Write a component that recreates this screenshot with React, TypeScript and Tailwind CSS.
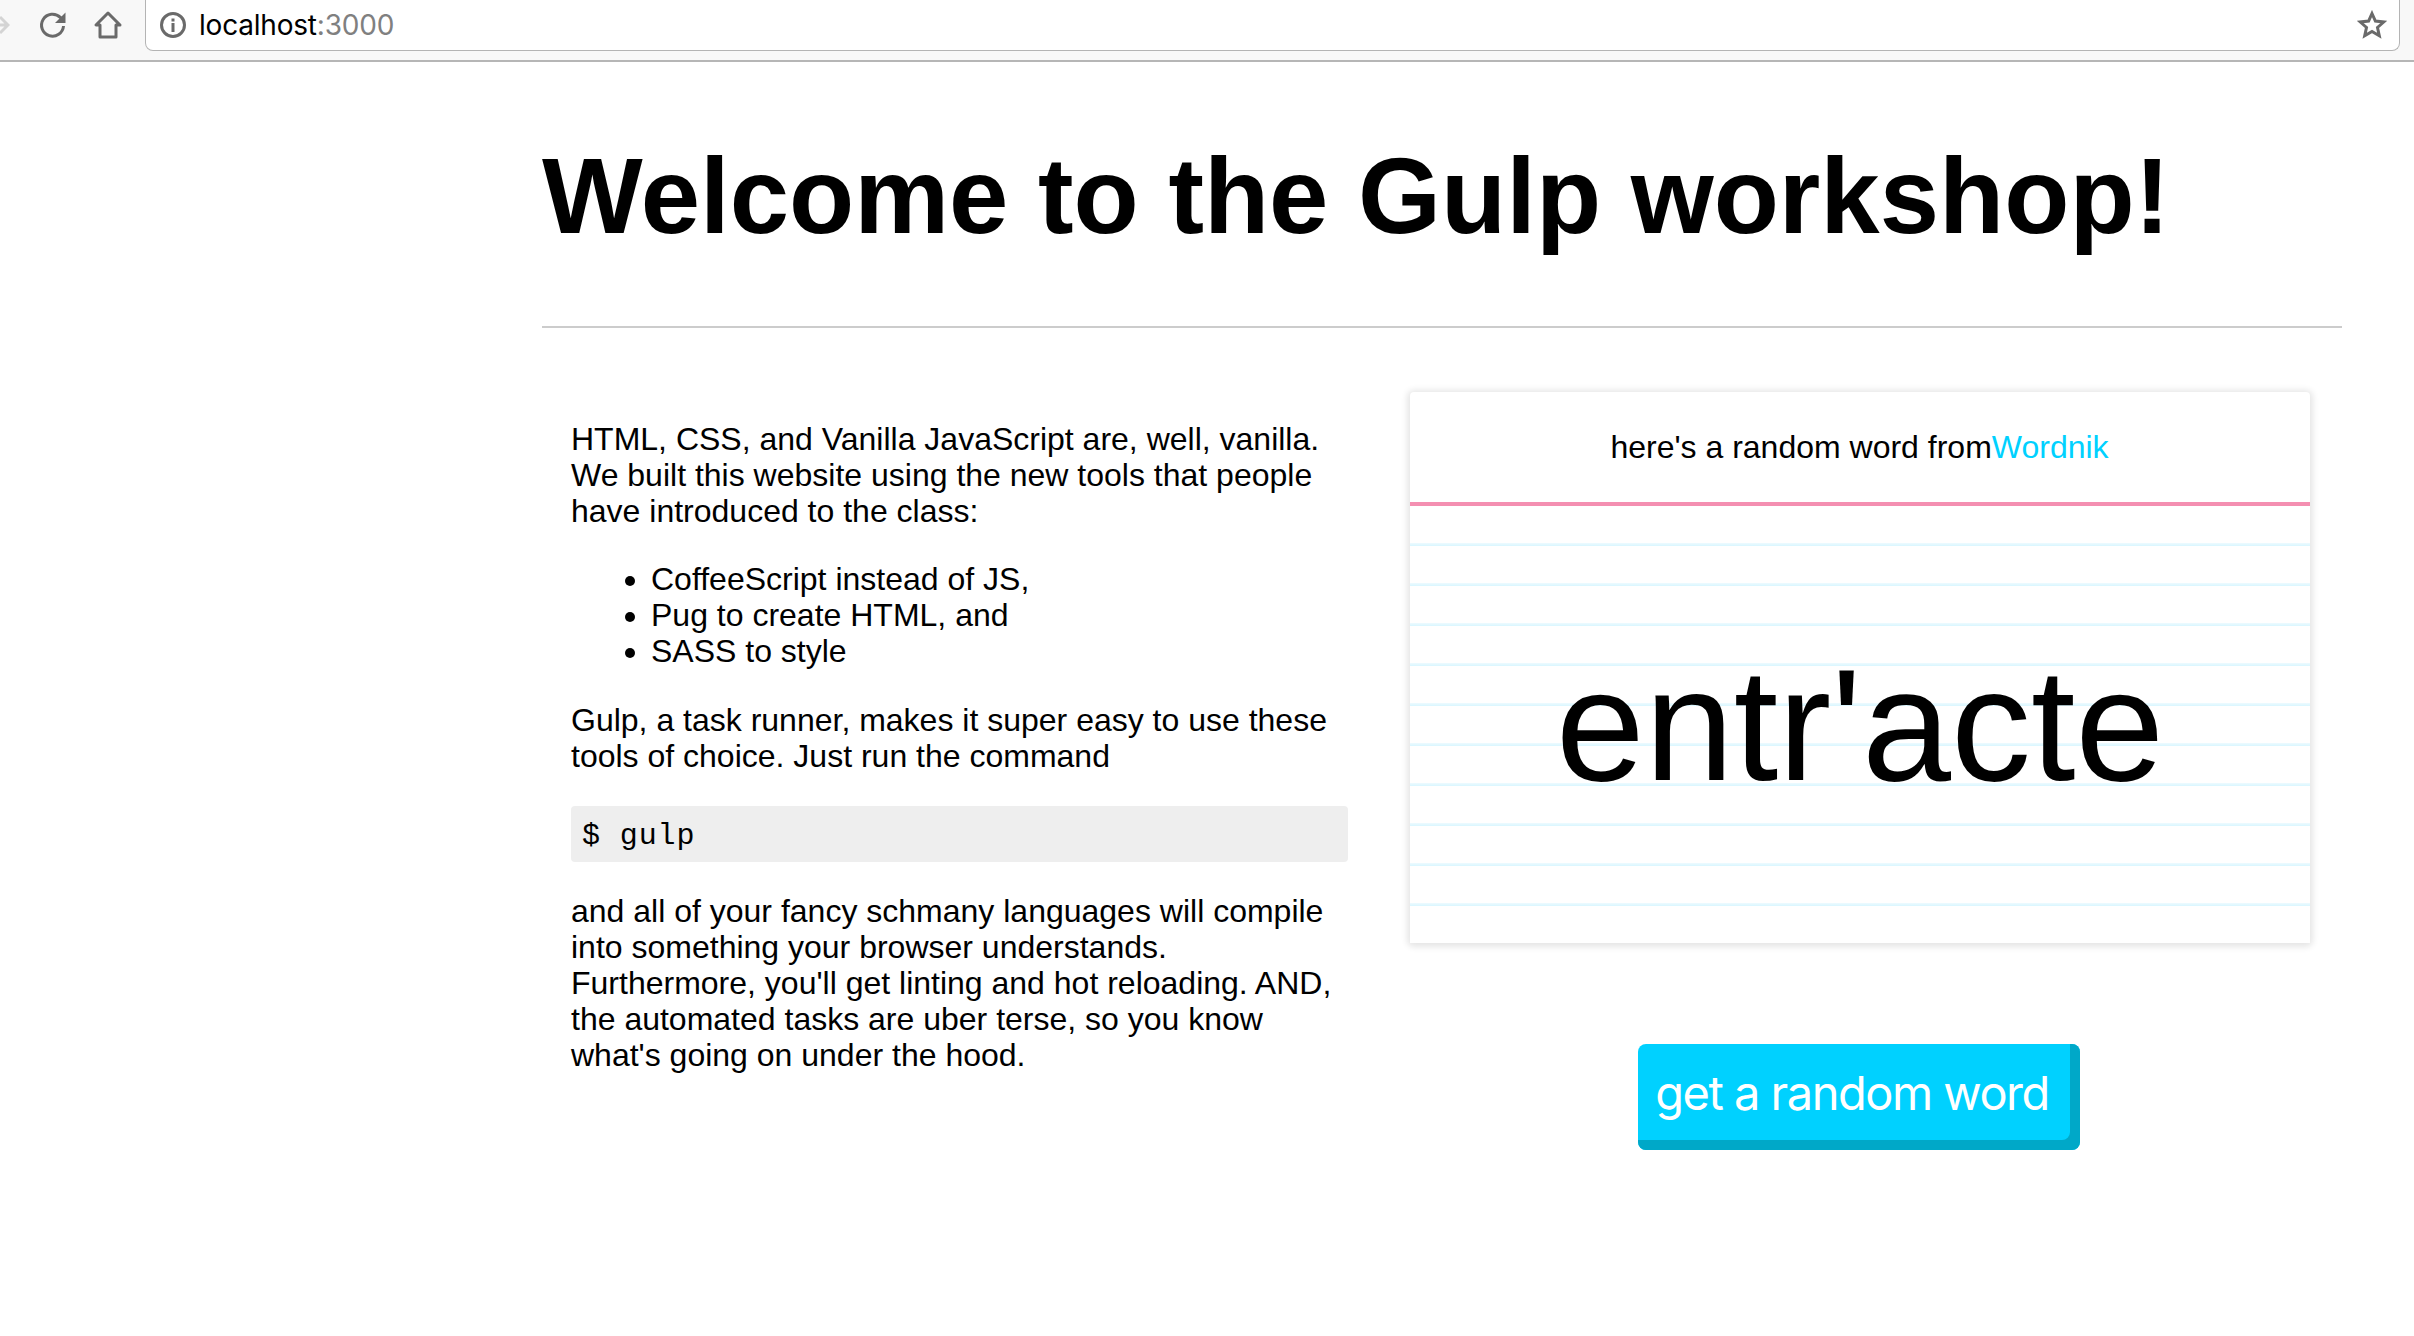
import React from 'react';

const BrowserBar: React.FC = () => (
  <div className="h-[62px] bg-[#f8f8f8] border-b-2 border-[#b6b6b6] flex items-start">
    <svg width="10" height="26" viewBox="0 0 10 26" className="mt-[12px] shrink-0">
      <path d="M-8 13H7M0 5l8 8-8 8" fill="none" stroke="#d4d4d4" strokeWidth="3" />
    </svg>
    <svg width="32" height="32" viewBox="0 0 32 32" className="ml-[27px] mt-[9px] shrink-0">
      <path d="M26.5 17a11 11 0 1 1-3.2-8.6L27 12" fill="none" stroke="#6a6a6a" strokeWidth="3" />
      <path d="M28.5 3.5V14H18z" fill="#6a6a6a" />
    </svg>
    <svg width="30" height="30" viewBox="0 0 30 30" className="ml-[24px] mt-[10px] shrink-0">
      <path d="M15 3 3 15h4v12h16V15h4z" fill="none" stroke="#6a6a6a" strokeWidth="3" strokeLinejoin="round" />
    </svg>
    <div className="ml-[22px] w-[2255px] h-[51px] bg-white border border-t-0 border-[#b4b4b4] rounded-b-[8px] flex items-center pl-[13px] pr-[12px]">
      <svg width="28" height="28" viewBox="0 0 28 28" className="shrink-0">
        <circle cx="14" cy="14" r="11.5" fill="none" stroke="#6a6a6a" strokeWidth="3" />
        <rect x="12.5" y="12" width="3" height="9" fill="#6a6a6a" />
        <rect x="12.5" y="7.5" width="3" height="3" fill="#6a6a6a" />
      </svg>
      <div className="ml-[12px] text-[28px] leading-none text-black font-['Inter',sans-serif] tracking-[-0.2px]">
        localhost<span className="text-[#808080]">:3000</span>
      </div>
      <svg width="30" height="30" viewBox="0 0 30 30" className="ml-auto shrink-0">
        <path d="M15 3.5l3.4 7.6 8.3.9-6.2 5.5 1.8 8.2-7.3-4.2-7.3 4.2 1.8-8.2-6.2-5.5 8.3-.9z" fill="none" stroke="#6a6a6a" strokeWidth="3" strokeLinejoin="miter" />
      </svg>
    </div>
  </div>
);

const Intro: React.FC = () => (
  <div className="w-[838px] pt-[93px] pl-[29px] pr-[32px] text-[32px] leading-[36px] text-black">
    <p>
      HTML, CSS, and Vanilla JavaScript are, well, vanilla. We built this website using the new tools that people have introduced to the class:
    </p>
    <ul className="list-disc pl-[80px] mt-[32px]">
      <li>CoffeeScript instead of JS,</li>
      <li>Pug to create HTML, and</li>
      <li>SASS to style</li>
    </ul>
    <p className="mt-[33px]">
      Gulp, a task runner, makes it super easy to use these tools of choice. Just run the command
    </p>
    <pre className="mt-[32px] h-[56px] bg-[#eeeeee] rounded-[4px] px-[11px] pt-[3px] flex items-center text-[30px] tracking-[0.9px] font-['Liberation_Mono',monospace]">
      $ gulp
    </pre>
    <p className="mt-[31px]">
      and all of your fancy schmany languages will compile into something your browser understands. Furthermore, you'll get linting and hot reloading. AND, the automated tasks are uber terse, so you know what's going on under the hood.
    </p>
  </div>
);

const WordCard: React.FC = () => (
  <div className="flex-1 pt-[64px] pl-[30px] flex flex-col items-start">
    <div className="w-[900px] h-[551px] bg-white rounded-[4px] shadow-[0_1px_6px_3px_rgba(0,0,0,0.1)] flex flex-col">
      <div className="h-[114px] border-b-[4px] border-[#f48fb1] flex justify-center items-start pt-[37px] pr-[1px] text-[32px] leading-[36px]">
        <span>here's a random word from</span>
        <span className="text-[#00d1ff]">Wordnik</span>
      </div>
      <div className="flex-1 flex items-center justify-center pt-[1px] text-[160px] leading-none bg-[repeating-linear-gradient(to_bottom,#ffffff_0px,#ffffff_37px,#eefbff_37px,#d8f6ff_40px)]">
        entr'acte
      </div>
    </div>
    <button className="mt-[101px] ml-[228px] w-[442px] h-[106px] rounded-[8px] bg-[#00d1ff] shadow-[inset_-10px_-10px_0_#00a8c8] text-white text-[47px] leading-none font-['Inter',sans-serif] tracking-[-1.5px] pb-[10px] pr-[14px]">
      get a random word
    </button>
  </div>
);

export default function App() {
  return (
    <div className="w-[2414px] h-[1336px] bg-white overflow-hidden font-['Liberation_Sans',Arial,sans-serif] text-black">
      <BrowserBar />
      <div className="ml-[542px] w-[1800px]">
        <h1 className="pt-[74px] h-[266px] text-[106.7px] leading-[120px] font-bold border-b-2 border-[#cccccc]">
          Welcome to the Gulp workshop!
        </h1>
        <div className="flex">
          <Intro />
          <WordCard />
        </div>
      </div>
    </div>
  );
}
